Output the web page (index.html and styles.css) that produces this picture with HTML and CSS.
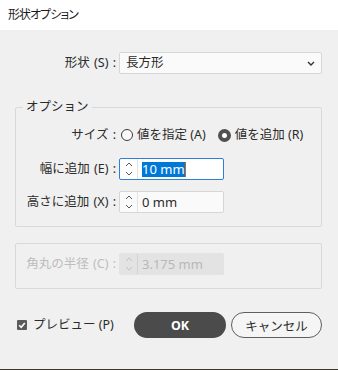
FILE: index.html
```html
<!DOCTYPE html>
<html lang="ja">
<head>
  <meta charset="UTF-8" />
  <title>形状オプション</title>
  <link rel="stylesheet" href="styles.css">
</head>
<body>

  <!-- title bar -->
  <div class="titlebar">形状オプション</div>

  <main class="dialog">

    <!-- shape select -->
    <div class="row">
      <span class="lbl">形状 (S) :</span>
      <div class="select">
        <span>長方形</span>
        <svg class="chev" width="8" height="5" viewBox="0 0 8 5"><path d="M1 1 L4 4 L7 1" fill="none" stroke="#333" stroke-width="1.4"/></svg>
      </div>
    </div>

    <!-- options -->
    <fieldset class="group">
      <legend>オプション</legend>

      <div class="row size-row">
        <span class="lbl">サイズ :</span>
        <label class="radio"><span class="dot"></span>値を指定 (A)</label>
        <label class="radio on"><span class="dot"></span>値を追加 (R)</label>
      </div>

      <div class="row field-row">
        <span class="lbl">幅に追加 (E) :</span>
        <div class="spin focus">
          <span class="arrows">
            <svg width="8" height="16" viewBox="0 0 8 16"><path d="M1 5 L4 2 L7 5 M1 11 L4 14 L7 11" fill="none" stroke="#555" stroke-width="1"/></svg>
          </span>
          <span class="val"><span class="sel">10 mm</span><span class="caret"></span></span>
        </div>
      </div>

      <div class="row field-row">
        <span class="lbl">高さに追加 (X) :</span>
        <div class="spin">
          <span class="arrows">
            <svg width="8" height="16" viewBox="0 0 8 16"><path d="M1 5 L4 2 L7 5 M1 11 L4 14 L7 11" fill="none" stroke="#555" stroke-width="1"/></svg>
          </span>
          <span class="val">0 mm</span>
        </div>
      </div>
    </fieldset>

    <!-- corner radius (disabled) -->
    <fieldset class="group off">
      <div class="row">
        <span class="lbl">角丸の半径 (C) :</span>
        <div class="spin">
          <span class="arrows">
            <svg width="8" height="16" viewBox="0 0 8 16"><path d="M1 5 L4 2 L7 5 M1 11 L4 14 L7 11" fill="none" stroke="#c4c4c4" stroke-width="1"/></svg>
          </span>
          <span class="val">3.175 mm</span>
        </div>
      </div>
    </fieldset>

    <!-- footer -->
    <div class="footer">
      <label class="check">
        <span class="box">
          <svg width="10" height="10" viewBox="0 0 10 10"><path d="M2.2 5.2 L4.2 7.2 L7.8 3" fill="none" stroke="#fff" stroke-width="1.6"/></svg>
        </span>
        プレビュー (P)
      </label>
      <div class="buttons">
        <button class="btn ok">OK</button>
        <button class="btn cancel">キャンセル</button>
      </div>
    </div>

  </main>

  <div class="desk"></div>

</body>
</html>
```

FILE: styles.css
```css
html, body {
  height: 100%;
}

body {
  margin: 0;
  display: flex;
  flex-direction: column;
  font-family: "Noto Sans", "Noto Sans CJK JP", sans-serif;
  font-size: 12.5px;
  line-height: 16px;
  color: #2b2b2b;
  overflow: hidden;
}

/* Title bar */
.titlebar {
  height: 30px;
  flex: none;
  background: #fff;
  padding-left: 8px;
  line-height: 30px;
  font-size: 12px;
  letter-spacing: -1px;
  color: #1a1a1a;
  font-feature-settings: "palt";
}

.dialog {
  flex: 1;
  background: #f0f0f0;
  padding: 22px 16px 0 15px;
}

.desk {
  height: 1px;
  flex: none;
  background: #3d3a2c;
}

/* rows */
.row {
  display: flex;
  align-items: center;
}

.lbl {
  width: 104px;
  flex: none;
  box-sizing: border-box;
  padding-right: 3px;
  text-align: right;
  white-space: nowrap;
  word-spacing: 1px;
}

.group .lbl {
  width: 103px;
}

/* select */
.select {
  flex: 1;
  height: 22px;
  box-sizing: border-box;
  border: 1px solid #d6d6d6;
  border-radius: 2px;
  background: #fafafa;
  display: flex;
  align-items: center;
  justify-content: space-between;
  padding: 0 6px 0 6px;
}

.chev {
  display: block;
}

/* groups */
.group {
  margin: 25px 0 0;
  padding: 10px 0 13px;
  border: 1px solid #d9d9d9;
  border-radius: 2px;
  min-width: 0;
}

.group legend {
  margin-left: 7px;
  padding: 0 3px;
  line-height: 16px;
}

.group.off {
  margin-top: 16px;
  padding: 9px 0 13px;
}

.size-row {
  height: 20px;
}

.field-row {
  margin-top: 13px;
}

.field-row + .field-row {
  margin-top: 11px;
}

/* radios */
.radio {
  display: flex;
  align-items: center;
  gap: 4px;
  margin-left: 2px;
}

.radio + .radio {
  margin-left: 12px;
}

.dot {
  width: 12px;
  height: 12px;
  box-sizing: border-box;
  border: 1px solid #3a3a3a;
  border-radius: 50%;
  background: #fafafa;
}

.radio.on .dot {
  width: 13px;
  height: 13px;
  border: 4.5px solid #505050;
  background: #fff;
}

/* spinner inputs */
.spin {
  width: 105px;
  height: 22px;
  box-sizing: border-box;
  border: 1px solid #d6d6d6;
  border-radius: 2px;
  background: #fafafa;
  display: flex;
}

.spin.focus {
  border-color: #2f7fd6;
  background: #fff;
}

.arrows {
  width: 17px;
  flex: none;
  border-right: 1px solid #e2e2e2;
  display: flex;
  align-items: center;
  justify-content: center;
}

.arrows svg {
  display: block;
}

.val {
  padding-left: 4px;
  display: flex;
  align-items: center;
  font-size: 13px;
}

.sel {
  background: #0078d7;
  color: #fff;
  line-height: 15px;
}

.caret {
  width: 1px;
  height: 15px;
  background: #c46a1c;
}

.off .lbl {
  color: #bdbdbd;
}

.off .spin {
  border-color: #e3e3e3;
  background: #e3e3e3;
  color: #b8b8b8;
}

.off .arrows {
  border-right-color: #d2d2d2;
}

/* footer */
.footer {
  margin-top: 23px;
  display: flex;
  align-items: center;
  justify-content: space-between;
  padding-left: 2px;
}

.check {
  display: flex;
  align-items: center;
  gap: 6px;
}

.box {
  width: 10px;
  height: 10px;
  border-radius: 1px;
  background: #5b5b5b;
}

.box svg {
  display: block;
}

.buttons {
  display: flex;
  gap: 5px;
}

.btn {
  height: 26px;
  border-radius: 13px;
  font-family: inherit;
  font-size: 12.5px;
  padding: 0;
  cursor: pointer;
}

.ok {
  width: 92px;
  border: none;
  background: #4b4b4b;
  color: #fff;
  font-weight: bold;
}

.cancel {
  width: 91px;
  border: 1px solid #5e5e5e;
  background: #f5f5f5;
  color: #2b2b2b;
}
```
